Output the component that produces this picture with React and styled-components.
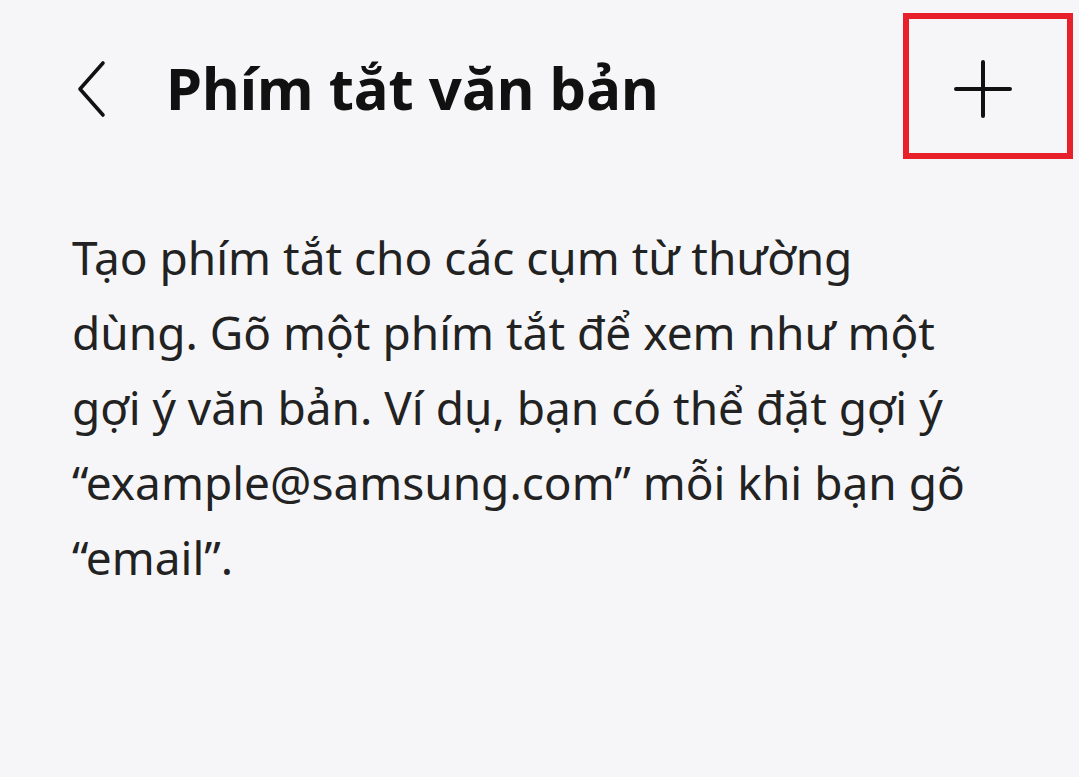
import React from 'react'
import styled, { createGlobalStyle } from 'styled-components'

const Global = createGlobalStyle`
  html, body {
    margin: 0;
    padding: 0;
    background: #f6f6f8;
  }
  body {
    font-family: "Noto Sans", "Liberation Sans", sans-serif;
    color: #1c1c1c;
  }
`

const Screen = styled.div`
  width: 1079px;
  height: 777px;
  background: #f6f6f8;
  overflow: hidden;
`

const Header = styled.div`
  display: flex;
  align-items: center;
  height: 178px;
  padding-left: 72px;
  padding-right: 6px;
  box-sizing: border-box;
`

const BackButton = styled.div`
  width: 40px;
  height: 60px;
  display: flex;
  align-items: center;
  justify-content: flex-start;
  margin-right: 54px;
`

const Title = styled.h1`
  flex: 1;
  margin: 0;
  font-size: 58px;
  font-weight: 700;
  color: #111;
  line-height: 1;
  padding-bottom: 2px;
`

const AddButton = styled.div`
  width: 170px;
  height: 146px;
  box-sizing: border-box;
  border: 6px solid ${p => (p.highlight ? '#e8202a' : 'transparent')};
  display: flex;
  align-items: center;
  justify-content: center;
  align-self: flex-start;
  margin-top: 13px;
  padding: 6px 10px 0 0;
`

const Description = styled.p`
  margin: 42px 0 0 72px;
  font-size: 46px;
  line-height: 75px;
  font-weight: 400;
  color: #222;
`

const lines = [
  'Tạo phím tắt cho các cụm từ thường',
  'dùng. Gõ một phím tắt để xem như một',
  'gợi ý văn bản. Ví dụ, bạn có thể đặt gợi ý',
  '“example@samsung.com” mỗi khi bạn gõ',
  '“email”.',
]

export default function App() {
  return (
    <Screen>
      <Global />
      <Header>
        <BackButton>
          <svg width="36" height="58" viewBox="0 0 36 58">
            <path d="M31 3 L8 29 L31 55" fill="none" stroke="#111" strokeWidth="3.6" strokeLinecap="round" strokeLinejoin="round" />
          </svg>
        </BackButton>
        <Title>Phím tắt văn bản</Title>
        <AddButton highlight>
          <svg width="58" height="58" viewBox="0 0 58 58">
            <path d="M29 2 V56 M2 29 H56" fill="none" stroke="#111" strokeWidth="4" strokeLinecap="round" />
          </svg>
        </AddButton>
      </Header>
      <Description>
        {lines.map((l, i) => (
          <React.Fragment key={i}>
            {l}
            {i < lines.length - 1 && <br />}
          </React.Fragment>
        ))}
      </Description>
    </Screen>
  )
}
